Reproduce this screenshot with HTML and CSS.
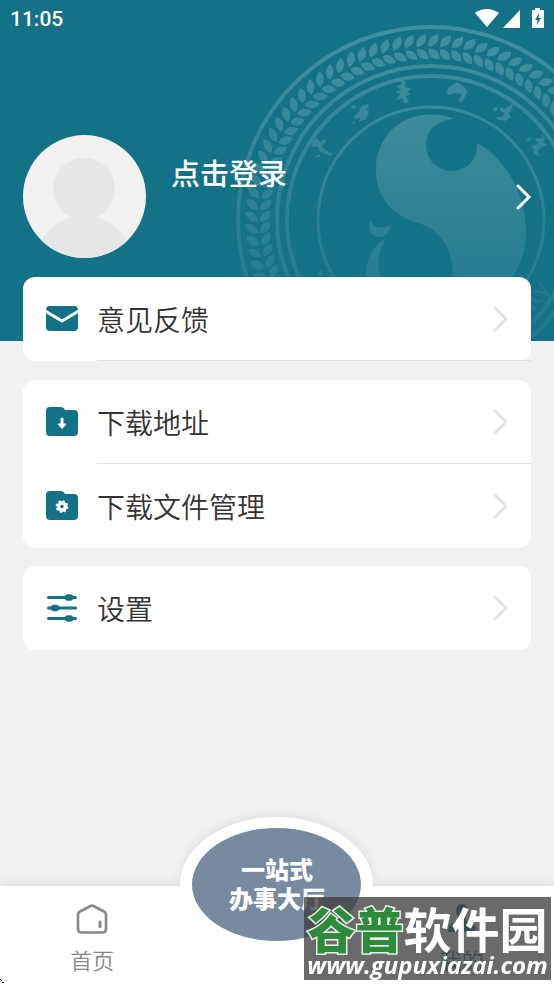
FILE: index.html
```html
<!DOCTYPE html>
<html lang="zh-CN">
<head>
<meta charset="utf-8">
<meta name="viewport" content="width=device-width, initial-scale=1">
<title>我的</title>
<link rel="stylesheet" href="styles.css">
</head>
<body>
<svg class="defs" aria-hidden="true">
  <symbol id="chevron" viewBox="0 0 16 26"><path d="M2 2 L13 13 L2 24" fill="none" stroke="currentColor" stroke-width="3" stroke-linecap="round" stroke-linejoin="miter"/></symbol>
</svg>

<header class="hero">
  <svg class="emblem" viewBox="231 20 400 400" aria-hidden="true">
    <defs>
      <linearGradient id="fade" gradientUnits="userSpaceOnUse" x1="0" y1="20" x2="0" y2="341">
        <stop offset="0" stop-color="#fff" stop-opacity=".21"/>
        <stop offset=".5" stop-color="#fff" stop-opacity=".13"/>
        <stop offset="1" stop-color="#fff" stop-opacity=".05"/>
      </linearGradient>
      <linearGradient id="fadeBody" gradientUnits="userSpaceOnUse" x1="0" y1="110" x2="0" y2="341">
        <stop offset="0" stop-color="#fff" stop-opacity=".18"/>
        <stop offset="1" stop-color="#fff" stop-opacity=".05"/>
      </linearGradient>
      <mask id="fadeMask" maskUnits="userSpaceOnUse" x="231" y="20" width="400" height="400">
        <rect x="231" y="20" width="400" height="400" fill="url(#fade)"/>
      </mask>
      <g id="l1">
        <path d="M-5 -173 C-7 -180 -3 -184 4 -186 C6 -179 3 -175 -5 -173Z"/>
        <path d="M-5 -171 C1 -172 6 -168 6 -161 C-1 -160 -6 -164 -5 -171Z"/>
      </g>
      <g id="l2"><use href="#l1"/><use href="#l1" transform="rotate(3.9)"/></g>
      <g id="l4"><use href="#l2"/><use href="#l2" transform="rotate(7.8)"/></g>
      <g id="l8"><use href="#l4"/><use href="#l4" transform="rotate(15.6)"/></g>
      <g id="l16"><use href="#l8"/><use href="#l8" transform="rotate(31.2)"/></g>
      <g id="l32"><use href="#l16"/><use href="#l16" transform="rotate(62.4)"/></g>
    </defs>
    <g mask="url(#fadeMask)">
      <g fill="none" stroke="#fff">
        <circle cx="431" cy="220" r="193" stroke-width="4"/>
        <circle cx="431" cy="220" r="154" stroke-width="4"/>
        <circle cx="431" cy="220" r="144" stroke-width="4"/>
        <circle cx="431" cy="220" r="113" stroke-width="3"/>
      </g>
      <g transform="translate(431 220)" fill="#fff">
        <use href="#l32" transform="rotate(-120)"/>
        <use href="#l16" transform="rotate(4.8)"/>
      </g>
      <g fill="#fff">
        <path d="M311 142 L316 138 L321 142 L324 139 L326 142 L322 146 L325 150 L333 154 L330 156 L320 152 L318 147 L312 146Z M315 156 L320 154 L320 157 L316 158Z"/>
        <path d="M351 106 L355 105 L356 108 L352 109Z M354 116 L359 112 L361 106 L368 104 L369 107 L366 109 L369 112 L366 119 L359 122 L360 118 L355 119Z M352 122 L355 121 L354 125Z"/>
        <path d="M401 80 L406 82 L405 87 L411 89 L407 92 L411 94 L406 96 L409 102 L405 104 L402 98 L396 100 L400 94 L395 92 L401 90 L396 86 L401 85Z"/>
        <path d="M447 91 C449 84 453 86 456 82 C460 84 466 86 467 92 C466 97 463 98 462 103 L458 101 L462 94 L454 93 L448 95Z"/>
        <path d="M493 108 L497 107 L497 111 L493 111Z M500 107 L505 109 L513 103 L511 112 L508 113 L511 117 L505 121 L496 119 L497 117 L502 117 L505 113 L500 111Z"/>
        <path d="M526 139 L531 137 L529 142Z M532 146 L539 143 L534 139 L542 138 L542 134 L545 138 L543 142 L547 145 L540 148 L537 152 L541 156 L534 154 L534 150Z"/>
      </g>
      <path d="M319 275 L322 271" fill="none" stroke="#fff" stroke-width="4"/>
    </g>
    <g fill="url(#fadeBody)">
      <path d="M454 119 C440 113 421 113 406 120 C387 129 376 148 376 169 C376 197 392 216 418 223 C441 229 453 250 453 277 C453 300 440 318 425 325 C480 325 526 282 526 232 C526 195 507 160 477 143 C478 158 468 171 452 171 C437 171 426 159 426 145 C426 130 437 120 454 119Z"/>
      <path d="M370 220 C374 229 384 230 391 224 C390 233 385 237 379 237 C372 237 367 230 370 220Z"/>
      <path d="M386 238 C369 248 363 266 367 290 L386 290 C376 274 376 254 386 238Z"/>
    </g>
    <text class="emblem-text" transform="translate(534 312) rotate(-55)">ity</text>
  </svg>

  <div class="status">
    <span class="time">11:05</span>
    <svg class="status-icons" viewBox="0 0 70 22" aria-hidden="true" fill="#fff">
      <path d="M0 5 Q11.500 -3 24 5 L12 19Z"/>
      <path d="M28 20 L45 2 V20Z"/>
      <path fill-rule="evenodd" d="M60 0 h5 v2 h3 q1 0 1 1 v16 q0 1 -1 1 h-10 q-1 0 -1 -1 v-16 q0 -1 1 -1 h2Z M64.500 4.500 L60 12 H62.500 L61.500 17.500 L66 10 H63.500Z"/>
    </svg>
  </div>

  <button class="profile" type="button">
    <svg class="avatar" viewBox="0 0 123 123" aria-hidden="true">
      <clipPath id="round"><circle cx="61.500" cy="61.500" r="61.500"/></clipPath>
      <g clip-path="url(#round)">
        <rect width="123" height="123" fill="#f1f1f1"/>
        <circle cx="61" cy="54" r="31" fill="#e6e6e6"/>
        <ellipse cx="61" cy="122" rx="46" ry="41" fill="#e6e6e6"/>
      </g>
    </svg>
    <span class="login">点击登录</span>
    <svg class="chevron"><use href="#chevron"/></svg>
  </button>
</header>

<main class="menu">
  <section class="card lined">
    <a class="row" href="#feedback">
      <svg class="icon" viewBox="0 0 32 32" aria-hidden="true"><rect x="0" y="3" width="32" height="25" rx="4" fill="#137286"/><path d="M-1 8 L16 18 L33 8" fill="none" stroke="#fff" stroke-width="3"/></svg>
      <span class="label">意见反馈</span>
      <svg class="chevron"><use href="#chevron"/></svg>
    </a>
  </section>
  <section class="card">
    <a class="row" href="#download">
      <svg class="icon" viewBox="0 0 32 32" aria-hidden="true"><path d="M4 1 H15 Q17 1 18 2.500 L19 4 H28 Q32 4 32 8 V26 Q32 30 28 30 H4 Q0 30 0 26 V5 Q0 1 4 1Z" fill="#137286"/><path d="M16 13 V20" stroke="#fff" stroke-width="3" stroke-linecap="round"/><path d="M12 18 H20 L16 22.500Z" fill="#fff" stroke="#fff" stroke-linejoin="round"/></svg>
      <span class="label">下载地址</span>
      <svg class="chevron"><use href="#chevron"/></svg>
    </a>
    <a class="row" href="#files">
      <svg class="icon" viewBox="0 0 32 32" aria-hidden="true"><path d="M4 1 H15 Q17 1 18 2.500 L19 4 H28 Q32 4 32 8 V26 Q32 30 28 30 H4 Q0 30 0 26 V5 Q0 1 4 1Z" fill="#137286"/><circle cx="16" cy="16.500" r="3.500" fill="none" stroke="#fff" stroke-width="3.500"/><circle cx="16" cy="16.500" r="5.400" fill="none" stroke="#fff" stroke-width="2" stroke-dasharray="2.120 2.120"/></svg>
      <span class="label">下载文件管理</span>
      <svg class="chevron"><use href="#chevron"/></svg>
    </a>
  </section>
  <section class="card">
    <a class="row" href="#settings">
      <svg class="icon" viewBox="0 0 32 32" aria-hidden="true" stroke="#137286" stroke-linecap="round" stroke-width="3"><path d="M2.500 5.500 H29.500 M2.500 16 H29.500 M2.500 26.500 H29.500"/><path d="M22 5.500 H24 M8 16 H10 M22 26.500 H24" stroke-width="6.500"/></svg>
      <span class="label">设置</span>
      <svg class="chevron"><use href="#chevron"/></svg>
    </a>
  </section>
</main>

<nav class="tabs">
  <a class="tab" href="#home">
    <svg class="tab-icon" viewBox="0 0 32 32" aria-hidden="true"><path d="M4 8.500 L14.500 3 Q16 2.300 17.500 3 L28 8.500 Q30 9.500 30 11.500 V26 Q30 29.500 26.500 29.500 H5.500 Q2 29.500 2 26 V11.500 Q2 9.500 4 8.500Z" fill="none" stroke="#888" stroke-width="2.600"/><path d="M24 19 V23.500" stroke="#888" stroke-width="3" stroke-linecap="round"/></svg>
    <span>首页</span>
  </a>
  <div class="tab">
    <a class="hall" href="#hall">一站式<br>办事大厅</a>
  </div>
  <a class="tab active" href="#me">
    <svg class="tab-icon" viewBox="0 0 32 32" aria-hidden="true" fill="#137286"><ellipse cx="16" cy="8" rx="6" ry="7"/><path d="M12 14 H20 V18 L27 21 Q30 23 30 29 H2 Q2 23 5 21 L12 18Z"/></svg>
    <span>我的</span>
  </a>
  <div class="watermark">
    <span class="mark-name"><span class="mark-green">谷普</span>软件园</span>
    <span class="mark-url">www.gupuxiazai.com</span>
  </div>
  <svg class="cursor" viewBox="0 0 4 5" aria-hidden="true"><path d="M0 0h1v1H0zM1 1h1v1H1zM2 3h2v1H2z"/></svg>
</nav>
</body>
</html>
```
FILE: styles.css
```css
* { box-sizing: border-box; }

body {
  margin: 0;
  min-height: 100vh;
  display: flex;
  flex-direction: column;
  background: #f1f1f1;
  color: #333;
  font-family: "Noto Sans CJK SC", sans-serif;
}

a { color: inherit; text-decoration: none; }
svg { display: block; flex: none; }
.defs { position: absolute; width: 0; height: 0; }

.hero {
  position: relative;
  overflow: hidden;
  padding-bottom: 83px;
  background: #137286;
  color: #fff;
}

/* Decorative seal, bleeding off the right edge */
.emblem {
  position: absolute;
  top: 20px;
  right: -77px;
  width: 400px;
  height: 400px;
}
.emblem-text {
  fill: #fff;
  fill-opacity: .08;
  font: 500 26px "Open Sans", sans-serif;
}

.status {
  position: relative;
  display: flex;
  justify-content: space-between;
  align-items: center;
  height: 38px;
  padding: 0 9px 0 10px;
}
.time { font: 500 21px/24px Roboto, sans-serif; }
.status-icons { width: 70px; height: 22px; }

.profile {
  position: relative;
  display: flex;
  align-items: center;
  width: 100%;
  margin-top: 97px;
  padding: 0 22px 0 23px;
  border: 0;
  background: none;
  color: inherit;
  font: inherit;
  text-align: left;
}
.avatar { width: 123px; height: 123px; }
.login {
  flex: 1;
  align-self: flex-start;
  margin: 16px 0 0 25px;
  font-size: 29px;
  line-height: 42px;
  font-weight: 500;
}
.chevron { width: 16px; height: 26px; color: #dfe3e8; }
.profile .chevron { color: #fff; }

.menu {
  position: relative;
  display: flex;
  flex-direction: column;
  gap: 18px;
  margin-top: -64px;
  padding: 0 23px 24px;
}
.card {
  position: relative;
  border-radius: 12px;
  background: #fff;
}
.row {
  position: relative;
  display: flex;
  align-items: center;
  gap: 19px;
  height: 84px;
  padding: 0 22px 0 23px;
}
.lined { margin-bottom: 1px; }
.lined .row::after,
.row:not(:last-child)::after {
  content: "";
  position: absolute;
  left: 74px;
  right: 0;
  bottom: 0;
  border-bottom: 1px solid #dfe1e3;
}
.icon { width: 32px; height: 32px; }
.label {
  flex: 1;
  font-size: 28px;
  line-height: 40px;
  font-weight: 350;
}

.tabs {
  position: relative;
  display: grid;
  grid-template-columns: repeat(3, 1fr);
  margin-top: auto;
  background: #fff;
  filter: drop-shadow(0 -2px 5px rgba(0, 0, 0, .08));
}
.tab {
  display: flex;
  flex-direction: column;
  align-items: center;
  gap: 8px;
  height: 98px;
  padding-top: 17px;
  color: #888;
  font-size: 22px;
  line-height: 32px;
  font-weight: 350;
}
.tab-icon { width: 32px; height: 32px; }
.active { color: #137286; }

.hall {
  position: absolute;
  top: -69px;
  display: flex;
  align-items: center;
  justify-content: center;
  width: 193px;
  height: 135px;
  padding-bottom: 3px;
  border: solid #fff;
  border-width: 11px 12px;
  border-radius: 50%;
  background: #778a9f;
  color: #fff;
  font-size: 24px;
  line-height: 29px;
  font-weight: 900;
  text-align: center;
}

/* Site stamp over the lower right corner */
.watermark {
  position: absolute;
  right: 3px;
  bottom: 4px;
  width: 247px;
  height: 83px;
  display: flex;
  flex-direction: column;
  align-items: center;
  background: rgba(64, 64, 64, .78);
  color: #fff;
  white-space: nowrap;
}
.mark-name {
  font-size: 48px;
  line-height: 60px;
  font-weight: 700;
}
.mark-green {
  color: #2f8b3c;
  font-weight: 900;
  paint-order: stroke;
  -webkit-text-stroke: 3px #e8efe8;
}
.mark-url {
  margin-top: -8px;
  font: italic 700 24px/32px "Open Sans", sans-serif;
}
.cursor { position: absolute; left: 0; bottom: 0; width: 4px; height: 5px; }
```
